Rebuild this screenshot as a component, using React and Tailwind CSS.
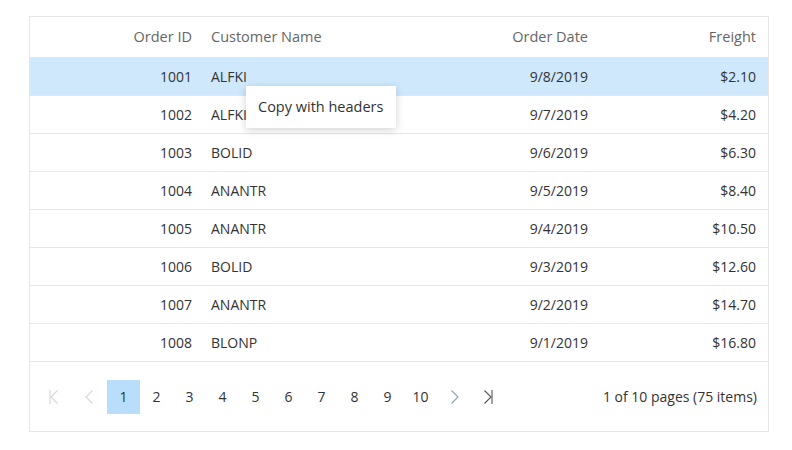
const rows = [
  ['1001', 'ALFKI', '9/8/2019', '$2.10'],
  ['1002', 'ALFKI', '9/7/2019', '$4.20'],
  ['1003', 'BOLID', '9/6/2019', '$6.30'],
  ['1004', 'ANANTR', '9/5/2019', '$8.40'],
  ['1005', 'ANANTR', '9/4/2019', '$10.50'],
  ['1006', 'BOLID', '9/3/2019', '$12.60'],
  ['1007', 'ANANTR', '9/2/2019', '$14.70'],
  ['1008', 'BLONP', '9/1/2019', '$16.80'],
];

const cols = 'grid grid-cols-[171px_200px_197px_1fr]';

function Chevron({ dir = 'right', bar = false, color }) {
  const left = dir === 'left';
  return (
    <svg width="14" height="16" viewBox="0 0 14 16" fill="none" stroke={color} strokeWidth="1.1">
      {left ? <path d="M10.5 1.5 L4 8 L10.5 14.5" /> : <path d="M3.5 1.5 L10 8 L3.5 14.5" />}
      {bar && (left ? <path d="M3 1 V15" /> : <path d="M11 1 V15" />)}
    </svg>
  );
}

export default function App() {
  return (
    <div className="min-h-screen bg-white pt-4 pl-[29px]" style={{ fontFamily: '"Open Sans", "Noto Sans", sans-serif' }}>
      <div className="relative w-[740px] border border-[#e6e6e6] text-[14px] text-[#333]">
        <div className={`${cols} h-[41px] items-center border-b border-[#e6e6e6] text-[14.5px] text-[#666]`}>
          <div className="pr-[9px] text-right">Order ID</div>
          <div className="pl-[10px]">Customer Name</div>
          <div className="pr-[10px] text-right">Order Date</div>
          <div className="pr-[12px] text-right">Freight</div>
        </div>
        {rows.map((r, i) => (
          <div
            key={r[0]}
            className={`${cols} h-[38px] items-center border-b border-[#e6e6e6] ${i === 0 ? 'bg-[#cfe8fc]' : ''}`}
          >
            <div className="pr-[9px] text-right">{r[0]}</div>
            <div className="pl-[10px]">{r[1]}</div>
            <div className="pr-[10px] text-right">{r[2]}</div>
            <div className="pr-[12px] text-right">{r[3]}</div>
          </div>
        ))}
        <div className="flex h-[69px] items-center justify-between pl-[7px] pr-[11px]">
          <div className="flex items-center">
            <div className="flex h-[34px] w-[33px] items-center justify-center">
              <Chevron dir="left" bar color="#d6d6d6" />
            </div>
            <div className="flex h-[34px] w-[33px] items-center justify-center pl-[5px]">
              <Chevron dir="left" color="#d6d6d6" />
            </div>
            <div className="ml-[4px] flex">
              {[1, 2, 3, 4, 5, 6, 7, 8, 9, 10].map((n) => (
                <div
                  key={n}
                  className={`flex h-[34px] w-[33px] items-center justify-center ${n === 1 ? 'bg-[#b8defc]' : ''}`}
                >
                  {n}
                </div>
              ))}
            </div>
            <div className="flex h-[34px] w-[33px] items-center justify-center pl-[3px]">
              <Chevron color="#8aa4b8" />
            </div>
            <div className="flex h-[34px] w-[33px] items-center justify-center pl-[3px]">
              <Chevron bar color="#555" />
            </div>
          </div>
          <div>1 of 10 pages (75 items)</div>
        </div>
        <div className="absolute left-[216px] top-[69px] flex h-[42px] w-[150px] items-center bg-white pl-[12px] text-[14.5px] text-[#333] shadow-[0_2px_8px_rgba(0,0,0,0.18)]">
          Copy with headers
        </div>
      </div>
    </div>
  );
}
